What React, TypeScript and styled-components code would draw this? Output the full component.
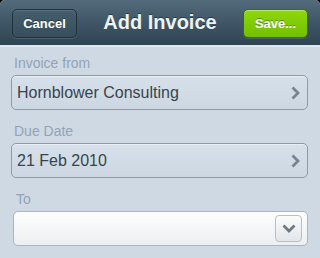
import styled, { createGlobalStyle } from "styled-components";

const GlobalStyle = createGlobalStyle`
  html, body {
    margin: 0;
    padding: 0;
    background: #000;
  }
  body {
    font-family: "Liberation Sans", Arial, sans-serif;
  }
`;

const Screen = styled.div`
  width: 320px;
  height: 258px;
  overflow: hidden;
  border-radius: 5px 5px 0 0;
  background: #ced9e4;
  display: flex;
  flex-direction: column;
`;

const NavBar = styled.div`
  height: 47px;
  flex-shrink: 0;
  display: flex;
  align-items: center;
  justify-content: space-between;
  padding: 0 12px;
  box-sizing: border-box;
  background: linear-gradient(#536b7b 0%, #3f5666 50%, #2e4453 100%);
  border-bottom: 2px solid #dfe7ee;
  position: relative;
`;

const Title = styled.div`
  position: absolute;
  left: 0;
  right: 0;
  text-align: center;
  font-size: 20px;
  font-weight: bold;
  color: #eef3f6;
  text-shadow: 0 -1px 0 rgba(0, 0, 0, 0.4);
  pointer-events: none;
`;

const NavButton = styled.button<{ $primary?: boolean }>`
  position: relative;
  z-index: 1;
  width: 65px;
  height: 29px;
  margin-top: 1px;
  padding: 0;
  border-radius: 5px;
  font-family: inherit;
  font-size: 13px;
  font-weight: bold;
  color: #fff;
  border: 1px solid ${(p) => (p.$primary ? "#3f6b00" : "#22323d")};
  background: ${(p) =>
    p.$primary
      ? "linear-gradient(#8fd80e, #72bf00)"
      : "linear-gradient(#465e6d, #374d5b)"};
  box-shadow: ${(p) =>
    p.$primary
      ? "inset 0 1px 0 rgba(255,255,255,0.35), 0 1px 0 rgba(255,255,255,0.12)"
      : "inset 0 1px 0 rgba(255,255,255,0.12), 0 1px 0 rgba(255,255,255,0.12)"};
  text-shadow: 0 -1px 0 rgba(0, 0, 0, 0.35);
`;

const Form = styled.div`
  display: flex;
  flex-direction: column;
  gap: 13px;
  padding: 8px 12px 0 11px;
`;

const Group = styled.div<{ $inset?: boolean }>`
  display: flex;
  flex-direction: column;
  gap: 4px;
  padding-left: ${(p) => (p.$inset ? "2px" : "0")};
`;

const Label = styled.div`
  font-size: 14px;
  line-height: 16px;
  color: #93a3b4;
  padding-left: 3px;
`;

const Field = styled.div<{ $white?: boolean }>`
  height: 35px;
  box-sizing: border-box;
  display: flex;
  align-items: center;
  justify-content: space-between;
  padding: 0 7px 0 5px;
  border-radius: 5px;
  border: 1px solid ${(p) => (p.$white ? "#aab5be" : "#8e9ba7")};
  background: ${(p) =>
    p.$white
      ? "linear-gradient(#fdfdfd, #eceff1)"
      : "linear-gradient(#d6e0ea, #ccd7e2)"};
  box-shadow: inset 0 1px 0 rgba(255, 255, 255, 0.45);
  font-size: 16px;
  color: #38444e;
`;

const DropButton = styled.div`
  width: 27px;
  height: 27px;
  margin-right: -2px;
  box-sizing: border-box;
  display: flex;
  align-items: center;
  justify-content: center;
  border-radius: 4px;
  border: 1px solid #b7c0c8;
  background: linear-gradient(#fbfcfc, #e2e6e9);
`;

const Chevron = () => (
  <svg width="9" height="14" viewBox="0 0 9 14">
    <path d="M1.5 1.5 L7 7 L1.5 12.5" fill="none" stroke="#77848e" strokeWidth="2.8" />
  </svg>
);

const ChevronDown = () => (
  <svg width="14" height="9" viewBox="0 0 14 9">
    <path d="M1.5 1.5 L7 7 L12.5 1.5" fill="none" stroke="#6c7a85" strokeWidth="2.8" />
  </svg>
);

export default function App() {
  return (
    <>
      <GlobalStyle />
      <Screen>
        <NavBar>
          <NavButton>Cancel</NavButton>
          <Title>Add Invoice</Title>
          <NavButton $primary>Save...</NavButton>
        </NavBar>
        <Form>
          <Group>
            <Label>Invoice from</Label>
            <Field>
              Hornblower Consulting
              <Chevron />
            </Field>
          </Group>
          <Group>
            <Label>Due Date</Label>
            <Field>
              21 Feb 2010
              <Chevron />
            </Field>
          </Group>
          <Group $inset>
            <Label>To</Label>
            <Field $white>
              <span />
              <DropButton>
                <ChevronDown />
              </DropButton>
            </Field>
          </Group>
        </Form>
      </Screen>
    </>
  );
}
